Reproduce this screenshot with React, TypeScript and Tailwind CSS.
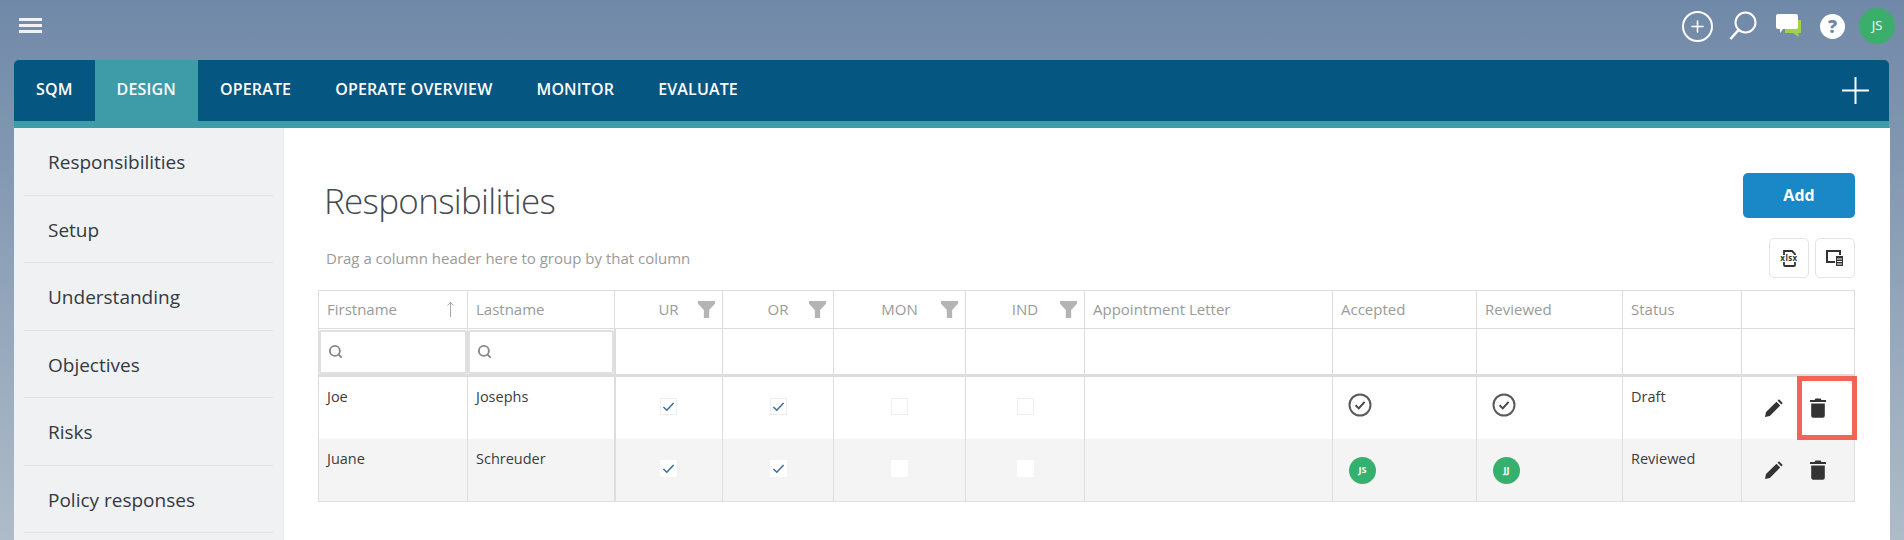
import { Plus, Search, MoveUp } from 'lucide-react';

const font = { fontFamily: '"Open Sans", "Noto Sans", sans-serif' };

const navItems = ['SQM', 'DESIGN', 'OPERATE', 'OPERATE OVERVIEW', 'MONITOR', 'EVALUATE'];
const sideItems = ['Responsibilities', 'Setup', 'Understanding', 'Objectives', 'Risks', 'Policy responses'];

const colWidths = ['w-[149px]', 'w-[147px]', 'w-[108px]', 'w-[111px]', 'w-[132px]', 'w-[119px]', 'w-[248px]', 'w-[144px]', 'w-[146px]', 'w-[119px]', 'w-[113px]'];
const headers = ['Firstname', 'Lastname', 'UR', 'OR', 'MON', 'IND', 'Appointment Letter', 'Accepted', 'Reviewed', 'Status', ''];

const rows = [
  { first: 'Joe', last: 'Josephs', perms: [true, true, false, false], accepted: null, reviewed: null, status: 'Draft', flagged: true },
  { first: 'Juane', last: 'Schreuder', perms: [true, true, false, false], accepted: 'JS', reviewed: 'JJ', status: 'Reviewed', flagged: false },
];

function FilterIcon() {
  return (
    <svg viewBox="0 0 16 16" className="absolute right-[7px] top-[10px] w-[17px] h-[17px] text-[#b4b4b4]">
      <path d="M0 0h16v2.5L10.5 8.5V16h-5V8.5L0 2.5z" fill="currentColor" />
    </svg>
  );
}

function Checkbox({ checked, shaded }: { checked: boolean; shaded: boolean }) {
  return (
    <div className={`mx-auto mb-[3px] w-[17px] h-[17px] flex items-center justify-center bg-white ${shaded ? '' : 'border border-[#eeeeee]'}`}>
      {checked && (
        <svg viewBox="0 0 14 14" className="w-[13px] h-[13px]">
          <path d="M1.5 7.5 5.2 11 12.5 3.2" fill="none" stroke="#3f6f9f" strokeWidth="1.7" />
        </svg>
      )}
    </div>
  );
}

function CheckCircle() {
  return (
    <svg viewBox="0 0 24 24" className="w-[24px] h-[24px] mb-[6px] -ml-[1px]">
      <circle cx="12" cy="12" r="10.5" fill="none" stroke="#5a5a5a" strokeWidth="2" />
      <path d="M7.5 12.3 10.8 15.4 16.6 8.8" fill="none" stroke="#4a4a4a" strokeWidth="2" />
    </svg>
  );
}

function Initials({ text }: { text: string }) {
  return (
    <div className="w-[27px] h-[27px] rounded-full bg-[#36b06f] text-white text-[9px] font-bold flex items-center justify-center">
      {text}
    </div>
  );
}

function TrashIcon() {
  return (
    <svg viewBox="0 0 16 20" className="w-[16px] h-[20px]">
      <path d="M5.5 0.5h5l1 1.5H16v2H0V2h4.5z M1.2 5.5h13.6v12.3a2 2 0 0 1-2 2H3.2a2 2 0 0 1-2-2z" fill="#333333" />
    </svg>
  );
}

function PencilIcon() {
  return (
    <svg viewBox="0 0 18 18" className="w-[18px] h-[18px]">
      <path d="M0 18 1 13 11.5 2.8 15.2 6.5 4.8 17z M12.6 1.7 14 .3 17.7 4 16.3 5.4z" fill="#333333" />
    </svg>
  );
}

export default function App() {
  return (
    <div style={font} className="h-[540px] overflow-hidden flex flex-col pl-[14px] pr-[15px] bg-gradient-to-b from-[#7089a8] to-[#aebcc8]">
      {/* top bar */}
      <header className="h-[60px] shrink-0 flex items-center justify-between">
        <div className="ml-[5px] flex flex-col gap-[3px] w-[23px] mb-[9px]">
          <span className="h-[3px] bg-[#eef2f6]" />
          <span className="h-[3px] bg-[#eef2f6]" />
          <span className="h-[3px] bg-[#eef2f6]" />
        </div>
        <div className="flex items-center -mr-[6px] mb-[8px]">
          <div className="w-[31px] h-[31px] rounded-full border-2 border-white flex items-center justify-center">
            <Plus className="w-[19px] h-[19px] text-white" strokeWidth={2} />
          </div>
          <svg viewBox="0 0 28 30" className="ml-[16px] w-[28px] h-[30px]">
            <circle cx="16.5" cy="11.5" r="10" fill="none" stroke="white" strokeWidth="2" />
            <path d="M9.5 19 1.5 28" stroke="white" strokeWidth="2.6" />
          </svg>
          <svg viewBox="0 0 26 24" className="ml-[19px] w-[26px] h-[24px]">
            <path d="M9 6h16v13h-3l1 4-6-4H9z" fill="#a3d04b" />
            <path d="M2 0h18a2 2 0 0 1 2 2v11a2 2 0 0 1-2 2H7l-3 4v-4H2a2 2 0 0 1-2-2V2a2 2 0 0 1 2-2z" fill="white" />
          </svg>
          <div className="ml-[18px] w-[25px] h-[25px] rounded-full bg-white text-[#7089a8] text-[18px] font-extrabold flex items-center justify-center">?</div>
          <div className="ml-[14px] w-[36px] h-[36px] rounded-full bg-[#3cae6c] text-white text-[13px] flex items-center justify-center">JS</div>
        </div>
      </header>

      {/* module nav */}
      <nav className="h-[68px] shrink-0 rounded-t-[5px] overflow-hidden bg-[#3e9ca8]">
        <div className="h-[61px] flex items-stretch justify-between bg-[#055680]">
          <div className="flex">
            {navItems.map((item) => (
              <div key={item} className={`px-[22px] pb-[3px] flex items-center text-[16px] font-semibold text-white tracking-[0.15px] ${item === 'DESIGN' ? 'bg-[#3e9ca8]' : ''}`}>
                {item}
              </div>
            ))}
          </div>
          <div className="flex items-center pr-[20px]">
            <svg viewBox="0 0 27 27" className="w-[27px] h-[27px]">
              <path d="M13.5 0v27M0 13.5h27" stroke="white" strokeWidth="2" />
            </svg>
          </div>
        </div>
      </nav>

      <div className="flex-1 flex min-h-0">
        {/* sidebar */}
        <aside className="w-[270px] shrink-0 bg-[#f0f1f3] border-r border-[#e6e6e6] px-[10px]">
          {sideItems.map((item) => (
            <div key={item} className="h-[67.5px] pl-[24px] pt-[2px] flex items-center border-b border-[#e2e3e5] text-[19px] text-[#333a42]">
              {item}
            </div>
          ))}
        </aside>

        {/* main */}
        <main className="flex-1 bg-white pl-[34px] pr-[35px] pt-[45px]">
          <div className="flex items-center justify-between h-[45px]">
            <h1 className="ml-[6px] pt-[11px] text-[35px] font-light text-[#444b52] tracking-[-0.7px]">Responsibilities</h1>
            <button className="w-[112px] h-[45px] pb-[2px] rounded-[5px] bg-[#1a87c6] text-white text-[16px] font-bold">Add</button>
          </div>

          <div className="mt-[20px] h-[40px] flex items-center justify-between">
            <span className="ml-[8px] text-[15px] text-[#9a9a9a]">Drag a column header here to group by that column</span>
            <div className="flex gap-[6px]">
              <div className="w-[40px] h-[40px] rounded-[5px] border border-[#e4e4e4] flex items-center justify-center">
                <div className="relative w-[17px] h-[17px] flex items-center justify-center">
                  <svg viewBox="0 0 17 17" className="absolute inset-0 w-[17px] h-[17px]">
                    <path d="M3 5V1h8l3 3v1M3 12v3a1 1 0 0 0 1 1h9a1 1 0 0 0 1-1v-3" fill="none" stroke="#333" strokeWidth="1.8" />
                  </svg>
                  <span className="relative text-[8px] leading-none font-bold text-[#333] tracking-[0.4px]">xlsx</span>
                </div>
              </div>
              <div className="w-[40px] h-[40px] rounded-[5px] border border-[#e4e4e4] flex items-center justify-center">
                <svg viewBox="0 0 18 17" className="w-[18px] h-[17px]">
                  <path d="M1 1h13v11H1z" fill="none" stroke="#333" strokeWidth="2" />
                  <path d="M9.5 5.5h8v11h-8z" fill="#333" stroke="white" strokeWidth="1" />
                  <path d="M11 9h5M11 11.5h5M11 14h5" stroke="white" strokeWidth="1" />
                </svg>
              </div>
            </div>
          </div>

          {/* grid */}
          <table className="mt-[12px] table-fixed w-[1536px] border-collapse text-[14.5px]">
            <colgroup>
              {colWidths.map((w, i) => (
                <col key={i} className={w} />
              ))}
            </colgroup>
            <thead>
              <tr className="h-[38px] text-[15px]">
                {headers.map((h, i) => (
                  <th key={i} className={`relative border border-[#dddddd] font-normal text-[#9a9a9a] px-[8px] ${i >= 2 && i <= 5 ? 'text-center' : 'text-left'}`}>
                    {h}
                    {i === 0 && <MoveUp className="absolute right-[8px] top-[10px] w-[17px] h-[17px] text-[#999999]" strokeWidth={1.2} />}
                    {i >= 2 && i <= 5 && <FilterIcon />}
                  </th>
                ))}
              </tr>
              <tr className="h-[47px] border-b-[3px] border-[#dddddd]">
                {headers.map((_, i) => (
                  <th key={i} className={`border-x border-[#dddddd] font-normal p-0 ${i === 2 ? 'border-l-2' : ''}`}>
                    {i < 2 && (
                      <div className="h-[44px] rounded-[2px] border-2 border-[#e0e0e0] pl-[7px] flex items-center">
                        <Search className="w-[15px] h-[15px] text-[#888888]" strokeWidth={3} />
                      </div>
                    )}
                  </th>
                ))}
              </tr>
            </thead>
            <tbody className="text-[#3c3c3c] border-b border-[#dddddd]">
              {rows.map((row, r) => {
                const shaded = r % 2 === 1;
                return (
                  <tr key={row.first} className={`h-[62px] ${shaded ? 'bg-[#f4f4f4]' : ''}`}>
                    <td className="border-x border-[#dddddd] align-top px-[8px] pt-[9px]">{row.first}</td>
                    <td className="border-x border-[#dddddd] align-top px-[8px] pt-[9px]">{row.last}</td>
                    {row.perms.map((p, i) => (
                      <td key={i} className={`border-x border-[#dddddd] ${i === 0 ? 'border-l-2' : ''}`}>
                        <Checkbox checked={p} shaded={shaded} />
                      </td>
                    ))}
                    <td className="border-x border-[#dddddd]" />
                    <td className="border-x border-[#dddddd] pl-[16px]">
                      {row.accepted ? <Initials text={row.accepted} /> : <CheckCircle />}
                    </td>
                    <td className="border-x border-[#dddddd] pl-[16px]">
                      {row.reviewed ? <Initials text={row.reviewed} /> : <CheckCircle />}
                    </td>
                    <td className="border-x border-[#dddddd] align-top px-[8px] pt-[9px]">{row.status}</td>
                    <td className="border-x border-[#dddddd] p-0">
                      <div className="relative h-[62px] flex items-center pl-[23px] gap-[27px]">
                        <PencilIcon />
                        <TrashIcon />
                        {row.flagged && (
                          <div className="absolute left-[55px] -top-[1px] w-[60px] h-[64px] border-[5px] border-[#f06555]" />
                        )}
                      </div>
                    </td>
                  </tr>
                );
              })}
            </tbody>
          </table>
        </main>
      </div>
    </div>
  );
}
